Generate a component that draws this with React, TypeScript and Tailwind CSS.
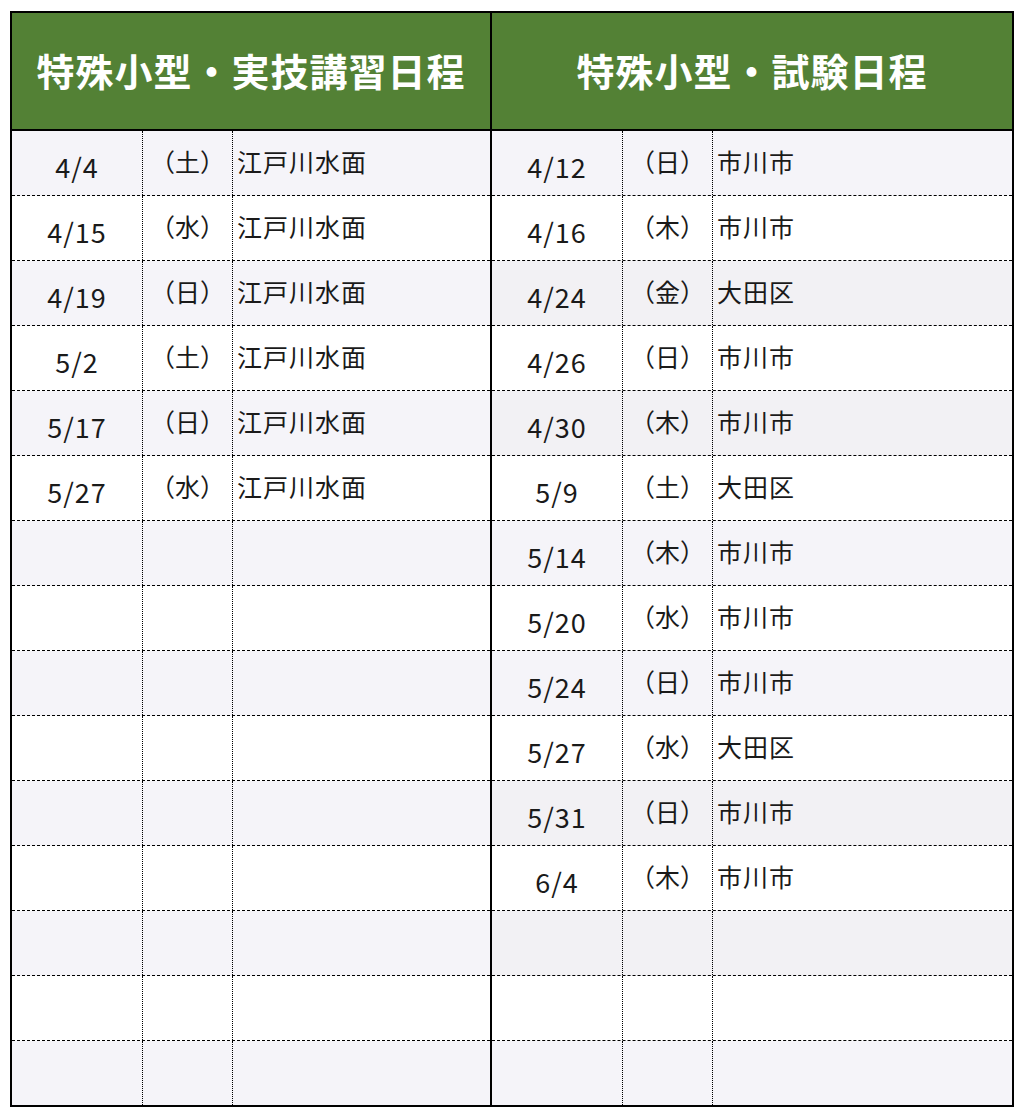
import React from "react";

type Row = { date: string; day: string; place: string; bg: string };

const LAV = "bg-[#f5f4f9]";
const GRAY = "bg-[#f2f1f4]";
const WHITE = "bg-white";

const leftData: [string, string, string][] = [
  ["4/4", "（土）", "江戸川水面"],
  ["4/15", "（水）", "江戸川水面"],
  ["4/19", "（日）", "江戸川水面"],
  ["5/2", "（土）", "江戸川水面"],
  ["5/17", "（日）", "江戸川水面"],
  ["5/27", "（水）", "江戸川水面"],
];

const rightData: [string, string, string][] = [
  ["4/12", "（日）", "市川市"],
  ["4/16", "（木）", "市川市"],
  ["4/24", "（金）", "大田区"],
  ["4/26", "（日）", "市川市"],
  ["4/30", "（木）", "市川市"],
  ["5/9", "（土）", "大田区"],
  ["5/14", "（木）", "市川市"],
  ["5/20", "（水）", "市川市"],
  ["5/24", "（日）", "市川市"],
  ["5/27", "（水）", "大田区"],
  ["5/31", "（日）", "市川市"],
  ["6/4", "（木）", "市川市"],
];

const leftBgs = Array.from({ length: 15 }, (_, i) => (i % 2 === 0 ? LAV : WHITE));
const rightOdd = [LAV, GRAY, GRAY, LAV, LAV, GRAY, GRAY, LAV];
const rightBgs = Array.from({ length: 15 }, (_, i) => (i % 2 === 0 ? rightOdd[i / 2] : WHITE));

function buildRows(data: [string, string, string][], bgs: string[]): Row[] {
  return bgs.map((bg, i) => ({
    date: data[i]?.[0] ?? "",
    day: data[i]?.[1] ?? "",
    place: data[i]?.[2] ?? "",
    bg,
  }));
}

function Panel({ title, rows, wide }: { title: string; rows: Row[]; wide: boolean }) {
  return (
    <div className={wide ? "w-[520px] flex flex-col" : "w-[480px] flex flex-col border-r-2 border-black"}>
      <div className="h-[118px] bg-[#538135] border-b-2 border-black flex items-center justify-center">
        <span className="text-white font-bold text-[38px] leading-none tracking-[1px] pb-[2px]">{title}</span>
      </div>
      {rows.map((r, i) => (
        <div
          key={i}
          className={`${r.bg} flex ${i === rows.length - 1 ? "h-[64px]" : "h-[65px] border-b border-dashed border-black"}`}
        >
          <div className="w-[131px] flex items-center justify-center text-[27px] tracking-[1px] text-[#1a1a1a] pt-[8px] border-r border-dotted border-black">
            {r.date}
          </div>
          <div className="w-[90px] flex items-center justify-center text-[25px] text-[#1a1a1a] pb-[3px] border-r border-dotted border-black">
            {r.day}
          </div>
          <div className="flex-1 flex items-center pl-[4px] text-[25px] tracking-[1px] text-[#1a1a1a] pb-[3px]">{r.place}</div>
        </div>
      ))}
    </div>
  );
}

export default function App() {
  return (
    <div
      className="w-[1029px] h-[1117px] bg-white pl-[10px] pt-[11px]"
      style={{ fontFamily: '"Noto Sans CJK JP", "Noto Sans", sans-serif' }}
    >
      <div className="w-[1004px] border-2 border-black flex">
        <Panel title="特殊小型・実技講習日程" rows={buildRows(leftData, leftBgs)} wide={false} />
        <Panel title="特殊小型・試験日程" rows={buildRows(rightData, rightBgs)} wide={true} />
      </div>
    </div>
  );
}
